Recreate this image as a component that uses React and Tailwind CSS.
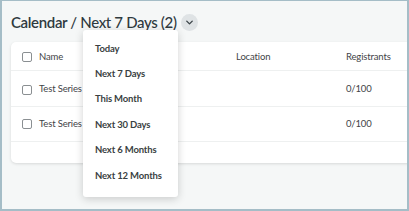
import { ChevronDown } from "lucide-react";

const rows = [
  { name: "Test Series", location: "", registrants: "0/100" },
  { name: "Test Series", location: "", registrants: "0/100" },
];

const ranges = ["Today", "Next 7 Days", "This Month", "Next 30 Days", "Next 6 Months", "Next 12 Months"];

function Checkbox() {
  return <span className="block w-[10px] h-[10px] rounded-[2px] border border-[#8a8f92] bg-white" />;
}

export default function App() {
  return (
    <div
      className="relative w-[409px] h-[211px] overflow-hidden bg-[#f5f7f7] border-t border-l-2 border-r-2 border-b-2 border-[#a5bdc7]"
      style={{ fontFamily: "Lato, 'Open Sans', sans-serif" }}
    >
      {/* Title */}
      <div className="flex items-center h-[41px] pl-[9px] pt-[2px]">
        <h1 className="text-[15px] leading-none text-[#2f3a3f] font-semibold tracking-[-0.35px]">
          Calendar <span className="font-medium">/ Next 7 Days (2)</span>
        </h1>
        <span className="ml-[4px] w-[17px] h-[17px] rounded-full bg-[#dfe3e5] flex items-center justify-center">
          <ChevronDown size={11} strokeWidth={3} className="text-[#3b4448]" />
        </span>
      </div>

      {/* Table card */}
      <div className="ml-[9px] w-[420px] bg-white rounded-[5px] shadow-[0_1px_3px_rgba(0,0,0,0.12)] text-[9.5px] tracking-[-0.15px] text-[#3f4447]">
        <div className="flex items-center h-[29px] pt-[2px] border-b border-[#eef0f0]">
          <div className="w-[28px] pl-[11px]"><Checkbox /></div>
          <div className="w-[197px]">Name</div>
          <div className="w-[110px]">Location</div>
          <div>Registrants</div>
        </div>
        {rows.map((r, i) => (
          <div key={i} className={`flex items-center ${i === 0 ? "h-[36px] pt-[2px]" : "h-[35px]"} border-b border-[#eef0f0]`}>
            <div className="w-[28px] pl-[11px]"><Checkbox /></div>
            <div className="w-[197px]">{r.name}</div>
            <div className="w-[110px]">{r.location}</div>
            <div>{r.registrants}</div>
          </div>
        ))}
        <div className="h-[21px]" />
      </div>

      {/* Dropdown menu */}
      <div className="absolute left-[81px] top-[29px] w-[95px] bg-white rounded-[3px] shadow-[0_2px_8px_rgba(0,0,0,0.18)] pt-[6px] pb-[9px]">
        {ranges.map((r) => (
          <div key={r} className="h-[25.4px] flex items-center pl-[12px] text-[9.5px] tracking-[-0.15px] font-bold text-[#3a3f42]">
            {r}
          </div>
        ))}
      </div>
    </div>
  );
}
